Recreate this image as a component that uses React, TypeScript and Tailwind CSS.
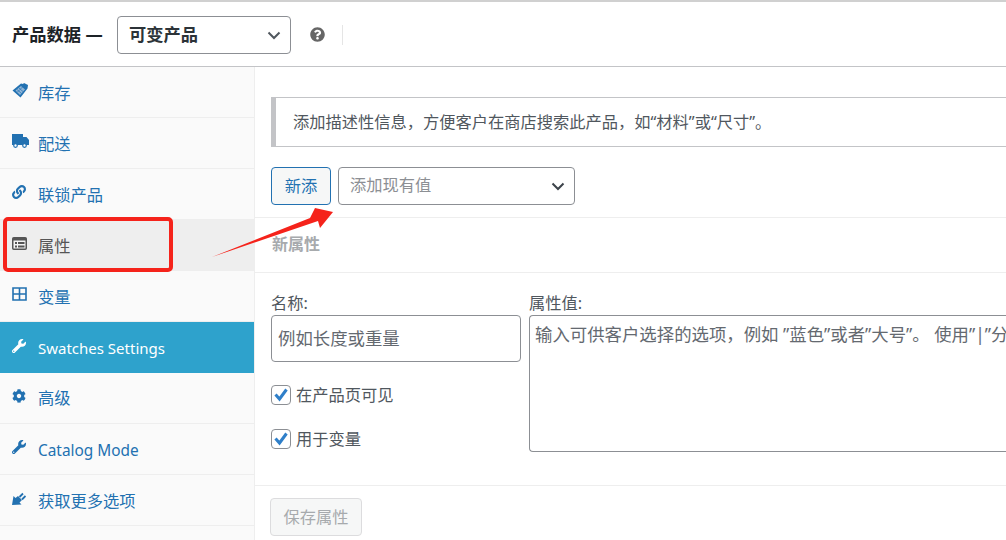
import React from "react";
import { FaLink, FaWrench, FaCog, FaQuestionCircle } from "react-icons/fa";

const font = "font-['Noto_Sans','Noto_Sans_CJK_SC',sans-serif]";

function Tag() {
  return (
    <svg width="17" height="15" viewBox="0 0 17 15" className="block">
      <path d="M0.5 7.5 L9 0.5 L11 1 L12 0 L16 2 L15.5 5.5 L8.5 14.5 Z" fill="#2271b1" />
      <path d="M3.5 7.5 L9 3 L13 6.5 L8 12 Z" fill="#8fb4d6" />
      <path d="M5 6.5 L9.5 10.5 M7 5 L11.5 9 M5.5 9 L10.5 4" stroke="#2271b1" strokeWidth="0.7" fill="none" />
    </svg>
  );
}

function Truck() {
  return (
    <svg width="17" height="14" viewBox="0 0 17 14" className="block">
      <path d="M0 0 H11 V3 H14.5 L17 6 V11 H0 Z" fill="#2271b1" />
      <circle cx="3.5" cy="11.5" r="1.8" fill="#fff" stroke="#2271b1" strokeWidth="1.2" />
      <circle cx="12.5" cy="11.5" r="1.8" fill="#fff" stroke="#2271b1" strokeWidth="1.2" />
    </svg>
  );
}

function Plug() {
  return (
    <svg width="14" height="13" viewBox="0 0 14 13" className="block">
      <path d="M0 13 L1.5 4 L3.5 6 L6 4 L10 8 L7.5 10.5 L9.5 12.5 Z" fill="#2271b1" />
      <path d="M7.5 5 L11 1.5 M10 7.5 L13.5 4" stroke="#2271b1" strokeWidth="1.8" fill="none" />
    </svg>
  );
}

function Attr() {
  return (
    <svg width="15" height="13" viewBox="0 0 15 13" className="block">
      <rect x="0.75" y="0.75" width="13.5" height="11.5" rx="1" fill="#f5f5f5" stroke="#555" strokeWidth="1.5" />
      <rect x="1" y="1" width="13" height="2.5" fill="#555" />
      <rect x="3" y="5" width="2" height="2" fill="#555" />
      <rect x="6" y="5" width="6.5" height="2" fill="#555" />
      <rect x="3" y="8.5" width="2" height="2" fill="#555" />
      <rect x="6" y="8.5" width="6.5" height="2" fill="#555" />
    </svg>
  );
}

function Grid() {
  return (
    <svg width="15" height="14" viewBox="0 0 15 14" className="block">
      <path d="M1 1 H14 V13 H1 Z M7.5 1 V13 M1 7 H14" fill="none" stroke="#2271b1" strokeWidth="1.6" />
    </svg>
  );
}

function Chevron({ color = "#50575e" }: { color?: string }) {
  return (
    <svg width="14" height="9" viewBox="0 0 14 9" className="block">
      <path d="M1.5 1.5 L7 7 L12.5 1.5" fill="none" stroke={color} strokeWidth="2" />
    </svg>
  );
}

function Check({ label }: { label: string }) {
  return (
    <div className="flex items-center gap-[5px] h-5">
      <span className="w-5 h-5 rounded-[4px] border border-[#8c8f94] bg-white flex items-center justify-center">
        <svg width="16" height="14" viewBox="0 0 16 14" className="block">
          <path d="M2.5 6.5 L6.5 11 L13.5 1.5" fill="none" stroke="#2f7fc9" strokeWidth="3" />
        </svg>
      </span>
      <span className="text-[16.25px] text-[#50575e]">{label}</span>
    </div>
  );
}

const items: { label: string; icon: React.ReactNode; extra?: string; text?: string }[] = [
  { label: "库存", icon: <Tag /> },
  { label: "配送", icon: <Truck /> },
  { label: "联锁产品", icon: <FaLink size={14} color="#2271b1" /> },
  { label: "属性", icon: <Attr />, extra: "bg-[#eeeeee] !text-[#555555] border-b-0" },
  { label: "变量", icon: <Grid /> },
  { label: "Swatches Settings", icon: <FaWrench size={14} color="#fff" />, extra: "bg-[#2ea2cc] !text-white border-b-0", text: "text-[15px] pt-[2px]" },
  { label: "高级", icon: <FaCog size={14} color="#2271b1" />, text: "text-[16.25px]" },
  { label: "Catalog Mode", icon: <FaWrench size={14} color="#2271b1" />, text: "text-[15.4px] pt-[4px]" },
  { label: "获取更多选项", icon: <Plug /> },
];

export default function App() {
  return (
    <div className={`relative w-[1006px] h-[540px] overflow-hidden bg-white ${font}`}>
      <div className="h-[67px] border-t-2 border-b border-t-[#d0d0d0] border-b-[#c3c4c7] flex items-center pl-3 pt-[2px]">
        <span className="text-[17.25px] font-bold text-[#1d2327] w-[105px] whitespace-nowrap">产品数据 —</span>
        <div className="w-[174px] h-[38px] rounded-[4px] border border-[#8c8f94] flex items-center justify-between pl-[11px] pr-[9px]">
          <span className="text-[17.25px] font-bold text-[#2c3338]">可变产品</span>
          <Chevron />
        </div>
        <FaQuestionCircle size={15} color="#666666" className="ml-[19px] -mt-[2px]" />
        <div className="ml-[17px] w-px h-5 bg-[#e5e5e5]" />
      </div>
      <div className="flex h-[473px]">
        <div className="w-[255px] shrink-0 border-r border-[#eeeeee] bg-[#fafafa]">
          {items.map((it) => (
            <div
              key={it.label}
              className={`h-[51px] box-border flex items-center border-b border-[#eeeeee] pl-3 text-[#2271b1] ${it.extra ?? ""}`}
            >
              <span className="w-[26px] shrink-0 flex items-center -mt-1">{it.icon}</span>
              <span className={`whitespace-nowrap ${it.text ?? "text-[16.25px] pt-[2px]"}`}>{it.label}</span>
            </div>
          ))}
        </div>
        <div className="flex-1 min-w-0 bg-white">
          <div className="pt-[30px] pl-[16px]">
            <div className="h-[50px] border-l-[5px] border-y border-[#c3c4c7] flex items-center pl-[17px] text-[16.25px] text-[#50575e] whitespace-nowrap overflow-hidden">
              添加描述性信息，方便客户在商店搜索此产品，如“材料”或“尺寸”。
            </div>
          </div>
          <div className="flex gap-[7px] pl-[16px] pt-5 pb-3 border-b border-[#eeeeee]">
            <div className="w-[60px] h-[38px] rounded-[4px] border border-[#2271b1] bg-[#f6f7f7] text-[#2271b1] text-[16.25px] flex items-center justify-center">
              新添
            </div>
            <div className="w-[237px] h-[38px] rounded-[4px] border border-[#8c8f94] flex items-center justify-between pl-[11px] pr-[9px]">
              <span className="text-[16.25px] text-[#8c8f94] -mt-[1px]">添加现有值</span>
              <Chevron color="#3c434a" />
            </div>
          </div>
          <div className="h-[55px] border-b border-[#eeeeee] flex items-center pl-[17px]">
            <span className="text-[16px] font-bold text-[#a7aaad] -mt-[2px]">新属性</span>
          </div>
          <div className="flex pl-[16px] pt-5 h-[213px] border-b border-[#eeeeee]">
            <div className="w-[258px] shrink-0">
              <div className="text-[16.25px] leading-[20px] text-[#50575e] mb-[2px]">名称:</div>
              <div className="w-[250px] h-[47px] rounded-[4px] border border-[#8c8f94] flex items-center pl-[6px] text-[17.4px] text-[#646970]">
                例如长度或重量
              </div>
              <div className="mt-[23px] flex flex-col gap-6">
                <Check label="在产品页可见" />
                <Check label="用于变量" />
              </div>
            </div>
            <div className="flex-1 min-w-0">
              <div className="text-[16.25px] leading-[20px] text-[#50575e] mb-[2px]">属性值:</div>
              <div className="h-[137px] rounded-l-[4px] border border-r-0 border-[#8c8f94] pl-[5px] pt-[6px] text-[17.4px] leading-[24px] text-[#646970] whitespace-nowrap overflow-hidden">
                输入可供客户选择的选项，例如 ”蓝色”或者”大号”。 使用”|”分
              </div>
            </div>
          </div>
          <div className="pl-[15px] pt-3">
            <div className="w-[92px] h-[38px] rounded-[4px] border border-[#dcdcde] bg-[#f6f7f7] text-[#a7aaad] text-[16.25px] flex items-center justify-center">
              保存属性
            </div>
          </div>
        </div>
      </div>
      <div className="absolute left-[3px] top-[217px] w-[170px] h-[55px] rounded-[5px] border-4 border-[#f5231b]" />
      <svg width="140" height="60" viewBox="0 0 140 60" className="absolute left-[205px] top-[205px]">
        <path d="M7 52 L105 13 L110 3 L128 7 L115 23 L113 16 Z" fill="#f5231b" />
      </svg>
    </div>
  );
}
